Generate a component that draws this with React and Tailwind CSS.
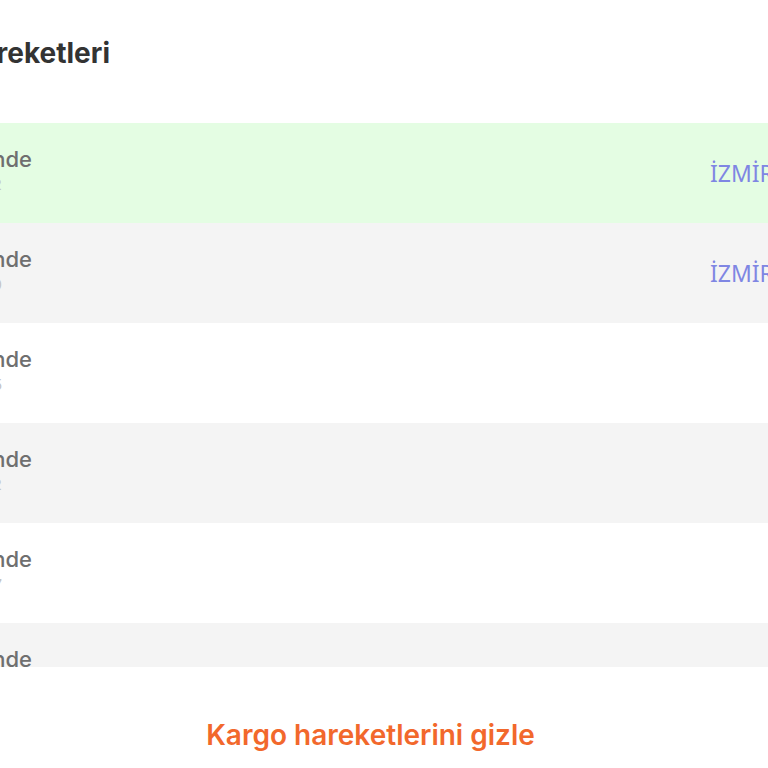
import React from 'react';

const rows = [
  { status: 'Transfer merkezinde', time: '12.03.2024 14:22', city: 'İZMİR', bg: 'bg-[#e4fde3]' },
  { status: 'Transfer merkezinde', time: '12.03.2024 09:10', city: 'İZMİR', bg: 'bg-[#f4f4f4]' },
  { status: 'Transfer merkezinde', time: '11.03.2024 22:45', city: '', bg: 'bg-white' },
  { status: 'Transfer merkezinde', time: '11.03.2024 18:02', city: '', bg: 'bg-[#f4f4f4]' },
  { status: 'Transfer merkezinde', time: '11.03.2024 16:37', city: '', bg: 'bg-white' },
  { status: 'Transfer merkezinde', time: '11.03.2024 13:05', city: '', bg: 'bg-[#f4f4f4]' },
];

function MovementRow({ row }) {
  return (
    <div className={`flex h-[100px] shrink-0 ${row.bg}`}>
      {/* status column, right-aligned so it runs off the left edge */}
      <div className="flex w-[32px] shrink-0 flex-col items-end pt-[21px]">
        <span className="whitespace-nowrap text-[22px] leading-[30px] font-medium text-[#6f6f6f]">
          {row.status}
        </span>
        <span className="mr-[30px] whitespace-nowrap text-[15px] leading-[22px] text-[#c4c4c4]">
          {row.time}
        </span>
      </div>
      <div className="flex-1" />
      <div className="flex w-[58px] shrink-0 items-center">
        <span className="whitespace-nowrap font-['Noto_Sans',sans-serif] text-[23px] text-[#7f86e3]">
          {row.city}
        </span>
      </div>
    </div>
  );
}

export default function App() {
  return (
    <div className="h-[768px] w-[768px] overflow-hidden bg-white font-['Inter',sans-serif]">
      <div className="flex h-[123px] pt-[35px]">
        <div className="flex w-[110px] shrink-0 justify-end">
          <h2 className="whitespace-nowrap text-[28px] leading-[36px] font-bold text-[#333333]">
            Kargo Hareketleri
          </h2>
        </div>
      </div>

      <div className="flex h-[544px] flex-col overflow-hidden">
        {rows.map((row, i) => (
          <MovementRow key={i} row={row} />
        ))}
      </div>

      <div className="flex justify-center pr-[27px] pt-[50px]">
        <button className="text-[28px] leading-[36px] font-semibold text-[#f2682c]">
          Kargo hareketlerini gizle
        </button>
      </div>
    </div>
  );
}
